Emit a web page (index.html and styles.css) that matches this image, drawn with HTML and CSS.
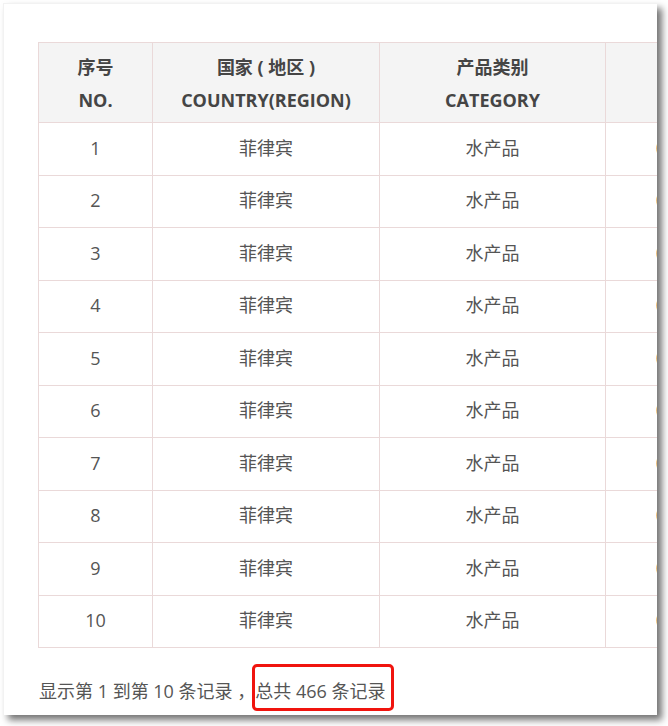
FILE: index.html
```html
<!DOCTYPE html>
<html lang="zh-CN">
<head>
<meta charset="utf-8">
<title>记录列表</title>
<link rel="stylesheet" href="styles.css">
</head>
<body>
<div class="panel">
  <table class="grid">
    <thead>
      <tr>
        <th class="c-no">序号<br>NO.</th>
        <th class="c-country">国家 ( 地区 )<br>COUNTRY(REGION)</th>
        <th class="c-cat">产品类别<br>CATEGORY</th>
        <th class="c-more">日期<br>DATE</th>
      </tr>
    </thead>
    <tbody>
      <tr><td>1</td><td>菲律宾</td><td>水产品</td><td class="more">0000-00-00 00:00</td></tr>
      <tr><td>2</td><td>菲律宾</td><td>水产品</td><td class="more">0000-00-00 00:00</td></tr>
      <tr><td>3</td><td>菲律宾</td><td>水产品</td><td class="more">0000-00-00 00:00</td></tr>
      <tr><td>4</td><td>菲律宾</td><td>水产品</td><td class="more">0000-00-00 00:00</td></tr>
      <tr><td>5</td><td>菲律宾</td><td>水产品</td><td class="more">0000-00-00 00:00</td></tr>
      <tr><td>6</td><td>菲律宾</td><td>水产品</td><td class="more">0000-00-00 00:00</td></tr>
      <tr><td>7</td><td>菲律宾</td><td>水产品</td><td class="more">0000-00-00 00:00</td></tr>
      <tr><td>8</td><td>菲律宾</td><td>水产品</td><td class="more">0000-00-00 00:00</td></tr>
      <tr><td>9</td><td>菲律宾</td><td>水产品</td><td class="more">0000-00-00 00:00</td></tr>
      <tr><td>10</td><td>菲律宾</td><td>水产品</td><td class="more">0000-00-00 00:00</td></tr>
    </tbody>
  </table>
  <p class="summary">显示第 1 到第 10 条记录 ，<span class="mark">总共 466 条记录</span></p>
</div>
</body>
</html>
```

FILE: styles.css
```css
html, body {
  margin: 0;
  padding: 0;
  background: #ffffff;
}

body {
  width: 668px;
  height: 726px;
  overflow: hidden;
  font-family: "Open Sans", "Noto Sans CJK SC", sans-serif;
  color: #555555;
}

.panel {
  margin: 3px 0 0 3px;
  width: 654px;
  height: 712px;
  box-sizing: border-box;
  padding: 39px 0 0 35px;
  background: #ffffff;
  border-top: 1px solid #f2f2f2;
  border-left: 1px solid #f2f2f2;
  box-shadow: 5px 5px 7px rgba(0, 0, 0, 0.55);
  overflow: hidden;
}

.grid {
  border-collapse: collapse;
  table-layout: fixed;
  width: 808px;
  font-size: 18px;
  margin-top: -1px;
  margin-left: -1px;
}

.grid th,
.grid td {
  border: 1px solid #ead9d9;
  text-align: center;
  padding: 0;
  white-space: nowrap;
  overflow: hidden;
}

.grid th {
  background: #f4f4f4;
  color: #454545;
  font-weight: 700;
  height: 77px;
  padding-top: 2px;
  line-height: 33px;
  font-size: 18px;
}

.grid td {
  height: 49.5px;
  padding-bottom: 2px;
  line-height: 24px;
}

.c-no { width: 113px; }
.c-country { width: 226px; }
.c-cat { width: 225px; }
.c-more { width: 244px; }

.grid th.c-more { color: transparent; }

.summary {
  margin: 23px 0 0 0;
  font-size: 18px;
  line-height: 40px;
  color: #555555;
  white-space: nowrap;
}

.mark {
  position: relative;
}

.mark::after {
  content: "";
  position: absolute;
  left: -3px;
  right: -8px;
  top: -15px;
  bottom: -8px;
  border: 3px solid #f0140e;
  border-radius: 5px;
}
```
